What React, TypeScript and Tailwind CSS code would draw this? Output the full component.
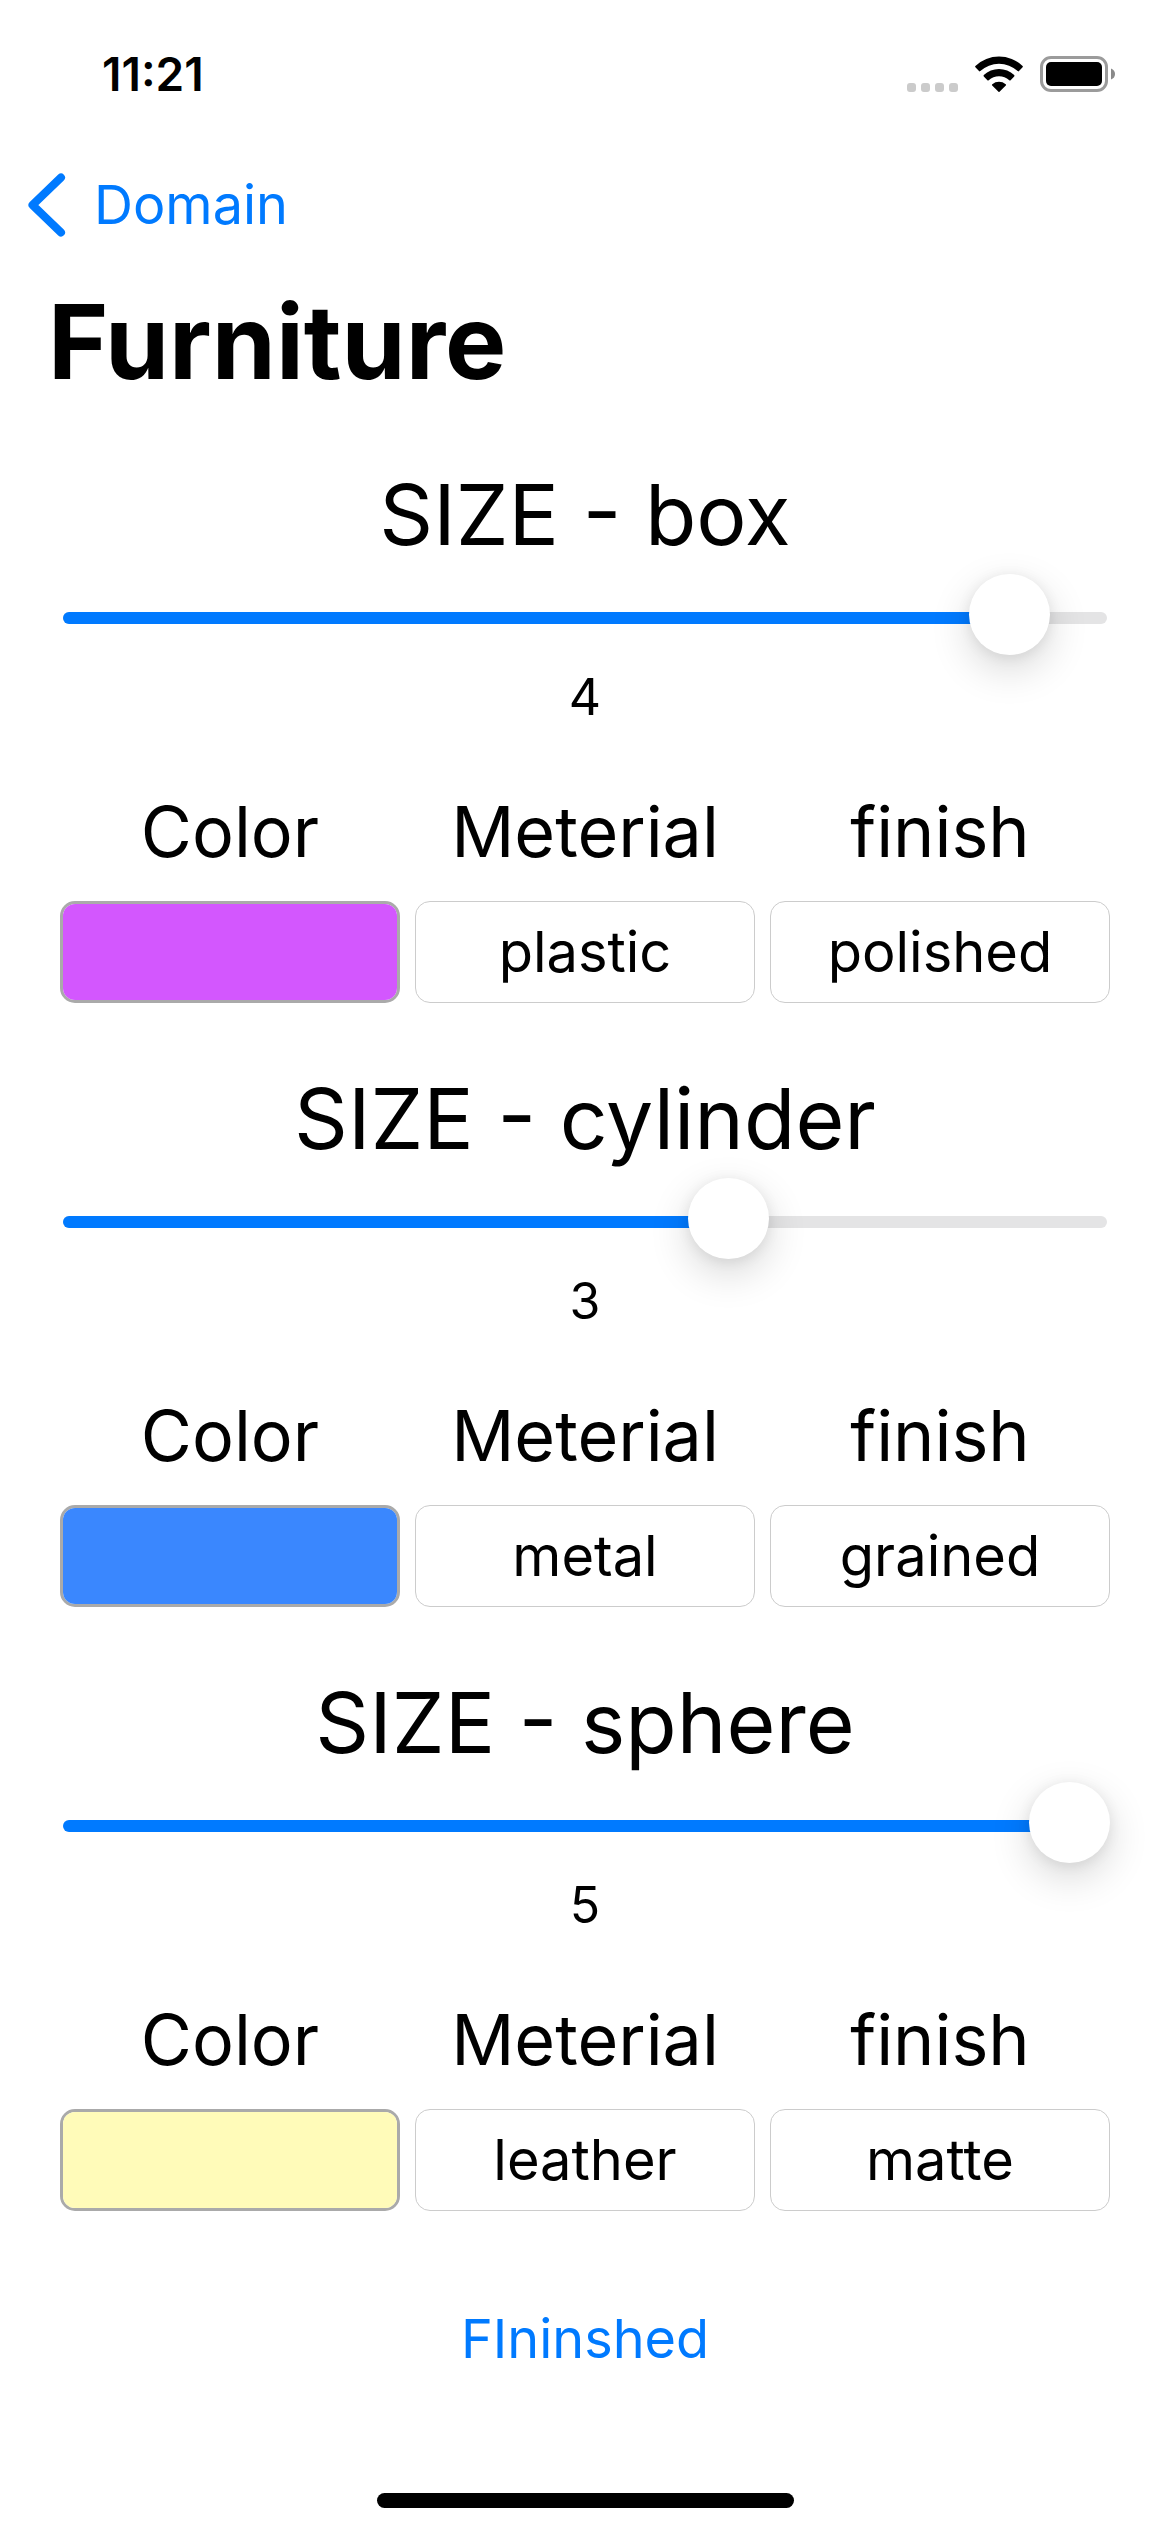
import { useId, useState } from "react";

type Shape = {
  name: string;
  size: number;
  color: string;
  material: string;
  finish: string;
};

const MAX_SIZE = 5;

const shapes: Shape[] = [
  { name: "box", size: 4.69, color: "#d357fe", material: "plastic", finish: "polished" },
  { name: "cylinder", size: 3.24, color: "#3a87fe", material: "metal", finish: "grained" },
  { name: "sphere", size: 5, color: "#fffbb9", material: "leather", finish: "matte" },
];

function StatusBar() {
  return (
    <div className="flex h-[148px] items-center justify-between pl-[102px] pr-[54px]">
      <time className="text-[46px] leading-none font-semibold">11:21</time>
      <div className="flex items-center">
        <svg width="52" height="36" viewBox="0 0 52 36" fill="#cbcbcb" aria-label="No signal">
          <rect x="0" y="27" width="9" height="9" rx="3" />
          <rect x="14" y="27" width="9" height="9" rx="3" />
          <rect x="28" y="27" width="9" height="9" rx="3" />
          <rect x="42" y="27" width="9" height="9" rx="3" />
        </svg>
        <svg className="ml-4" width="48" height="36" viewBox="0 0 48 36" aria-label="Wi-Fi">
          <path d="M.4 11.2Q-.2 10.5.4 9.9A34.5 34.5 0 0 1 47.6 9.9Q48.2 10.5 47.6 11.2L44 15.1Q43.4 15.7 42.7 15.1A27.5 27.5 0 0 0 5.3 15.1Q4.6 15.7 4 15.1Z" />
          <path d="M8.8 20.4Q8.2 19.7 8.8 19.1A22 22 0 0 1 39.2 19.1Q39.8 19.7 39.2 20.4L35.6 24.2Q35 24.8 34.3 24.2A15.6 15.6 0 0 0 13.7 24.2Q13 24.8 12.4 24.2Z" />
          <path d="M17.2 29.5Q16.6 28.8 17.3 28.2A10.3 10.3 0 0 1 30.7 28.2Q31.4 28.8 30.8 29.5L24.5 35.7Q24 36.2 23.5 35.7Z" />
        </svg>
        <svg className="ml-[17px]" width="76" height="36" viewBox="0 0 76 36" aria-label="Battery full">
          <rect x="1.5" y="1.5" width="65" height="33" rx="9.5" fill="none" stroke="#9b9b9b" strokeWidth="3" />
          <rect x="6" y="6" width="56" height="24" rx="5" />
          <path d="M71 12.5Q75 14 75 18T71 23.5Z" fill="#8a8a8a" />
        </svg>
      </div>
    </div>
  );
}

function SizeSlider({ id, value, onChange }: { id: string; value: number; onChange: (v: number) => void }) {
  return (
    <div className="grid items-center">
      <div className="mx-[3px] mt-[7px] h-3 overflow-hidden rounded-full bg-[#e4e4e5] [grid-area:1/1]">
        <div className="h-full bg-[#007aff]" style={{ width: `${(value / MAX_SIZE) * 100}%` }} />
      </div>
      <input
        id={id}
        type="range"
        min={0}
        max={MAX_SIZE}
        step={0.01}
        value={value}
        onChange={(e) => onChange(Number(e.target.value))}
        className="relative h-[81px] w-full appearance-none bg-transparent [grid-area:1/1] [&::-webkit-slider-thumb]:size-[81px] [&::-webkit-slider-thumb]:appearance-none [&::-webkit-slider-thumb]:rounded-full [&::-webkit-slider-thumb]:bg-white [&::-webkit-slider-thumb]:shadow-[0_14px_40px_rgba(0,0,0,0.16),0_2px_14px_rgba(0,0,0,0.08)]"
      />
    </div>
  );
}

const label = "text-center text-[70px] leading-[90px]";
const field =
  "h-[102px] w-full min-w-0 rounded-[15px] border border-[#cccccc] bg-white text-center text-[56px]";

function ShapeSection({ shape }: { shape: Shape }) {
  const id = useId();
  const [size, setSize] = useState(shape.size);
  const [color, setColor] = useState(shape.color);

  return (
    <section className="px-[60px]">
      <label htmlFor={`${id}-size`} className="block text-center text-[84px] leading-[118px]">
        SIZE - {shape.name}
      </label>
      <SizeSlider id={`${id}-size`} value={size} onChange={setSize} />
      <output htmlFor={`${id}-size`} className="mt-3 block text-center text-[50px] leading-[60px]">
        {Math.floor(size)}
      </output>
      <div className="mt-[60px] grid grid-cols-3 gap-[15px]">
        <div className="flex flex-col gap-6">
          <label htmlFor={`${id}-color`} className={label}>Color</label>
          <input
            id={`${id}-color`}
            type="color"
            value={color}
            onChange={(e) => setColor(e.target.value)}
            className="h-[102px] w-full appearance-none overflow-hidden rounded-[15px] border-[3px] border-[#aaaaaa] p-0 [&::-webkit-color-swatch-wrapper]:p-0 [&::-webkit-color-swatch]:rounded-none [&::-webkit-color-swatch]:border-0"
          />
        </div>
        <div className="flex flex-col gap-6">
          <label htmlFor={`${id}-material`} className={label}>Meterial</label>
          <input id={`${id}-material`} type="text" defaultValue={shape.material} className={field} />
        </div>
        <div className="flex flex-col gap-6">
          <label htmlFor={`${id}-finish`} className={label}>finish</label>
          <input id={`${id}-finish`} type="text" defaultValue={shape.finish} className={field} />
        </div>
      </div>
    </section>
  );
}

export default function App() {
  return (
    <div className="flex min-h-screen flex-col bg-white font-[Inter,sans-serif] text-black">
      <StatusBar />
      <nav className="flex h-[114px] items-center pl-7">
        <a href="#domain" className="flex items-center gap-[28px] text-[54px] leading-none text-[#007aff]">
          <svg width="38" height="64" viewBox="0 0 38 64" fill="none" stroke="currentColor" strokeWidth="8" strokeLinecap="round" strokeLinejoin="round" aria-hidden="true">
            <path d="M33 4.5L4.5 32L33 59.5" />
          </svg>
          Domain
        </a>
      </nav>
      <h1 className="mt-5 pl-12 text-[103px] leading-[120px] font-bold">Furniture</h1>
      <main className="mt-[54px] flex flex-col gap-[57px]">
        {shapes.map((shape) => (
          <ShapeSection key={shape.name} shape={shape} />
        ))}
      </main>
      <button type="button" className="mt-[92px] self-center text-[54px] leading-[72px] text-[#007aff]">
        FIninshed
      </button>
      <div className="mx-auto mt-auto mb-6 h-[15px] w-[417px] rounded-full bg-black" />
    </div>
  );
}
